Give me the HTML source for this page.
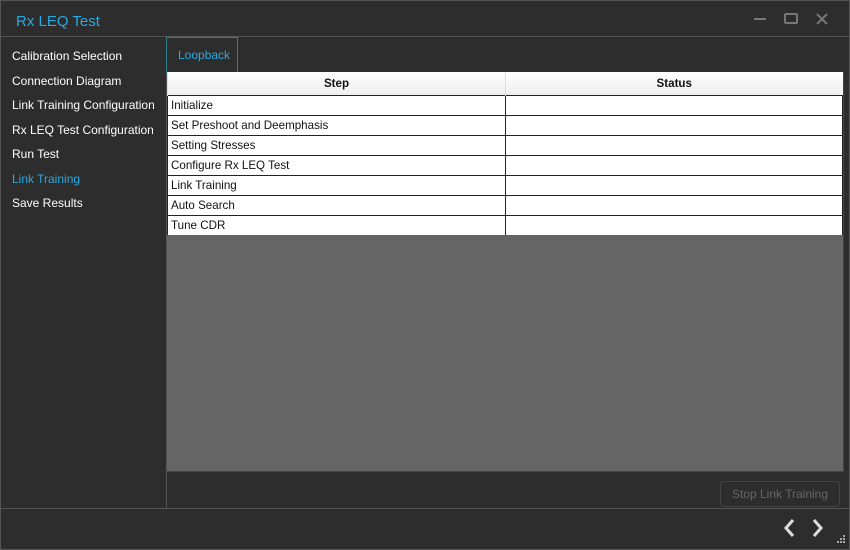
<!DOCTYPE html>
<html><head><style>
*{margin:0;padding:0;box-sizing:border-box}
body{width:850px;height:550px;background:#2d2d2d;font-family:"Liberation Sans",sans-serif;position:relative;overflow:hidden}
.win{position:absolute;left:0;top:0;width:850px;height:550px;border:1px solid #555}
.title{position:absolute;left:16px;top:13px;color:#29a9e0;font-size:15px}
.hline{position:absolute;background:#555;height:1px}
.vline{position:absolute;background:#555;width:1px}
.nav{position:absolute;left:12px;color:#fff;font-size:12px}
.tab{position:absolute;left:166px;top:37px;width:72px;height:36px;border:1px solid #2e7d8a;color:#29a9e0;font-size:12px;padding:10px 0 0 11px}
table{position:absolute;left:167px;top:72px;width:676px;border-collapse:collapse;background:#fff;font-size:11.6px}
th{height:23px;font-weight:bold;background:linear-gradient(#fff,#eee);border-left:1px solid #ddd;color:#111}
td{height:20px;border:1px solid #222;padding-left:3px;color:#111}
.gray{position:absolute;left:167px;top:235px;width:676px;height:236px;background:#656565}
.btn{position:absolute;left:720px;top:481px;width:120px;height:26px;border:1px solid #444;border-radius:3px;color:#666;font-size:12px;text-align:center;line-height:24px}
</style></head><body>
<div class="win"></div>
<div class="title">Rx LEQ Test</div>
<svg style="position:absolute;left:750px;top:10px" width="85" height="18">
<line x1="4" y1="9" x2="16" y2="9" stroke="#777" stroke-width="2"/>
<rect x="35" y="4" width="12" height="9" fill="none" stroke="#777" stroke-width="2" rx="1"/>
<path d="M67 4 L77 14 M77 4 L67 14" stroke="#777" stroke-width="2"/>
</svg>
<div class="hline" style="left:0;top:36px;width:850px"></div>
<div class="vline" style="left:166px;top:36px;height:472px"></div>
<div class="nav" style="top:49px">Calibration Selection</div>
<div class="nav" style="top:74px">Connection Diagram</div>
<div class="nav" style="top:98px">Link Training Configuration</div>
<div class="nav" style="top:123px">Rx LEQ Test Configuration</div>
<div class="nav" style="top:147px">Run Test</div>
<div class="nav" style="top:172px;color:#29a9e0">Link Training</div>
<div class="nav" style="top:196px">Save Results</div>
<div class="tab">Loopback</div>
<table>
<tr><th style="width:338px">Step</th><th>Status</th></tr>
<tr><td>Initialize</td><td></td></tr>
<tr><td>Set Preshoot and Deemphasis</td><td></td></tr>
<tr><td>Setting Stresses</td><td></td></tr>
<tr><td>Configure Rx LEQ Test</td><td></td></tr>
<tr><td>Link Training</td><td></td></tr>
<tr><td>Auto Search</td><td></td></tr>
<tr><td>Tune CDR</td><td></td></tr>
</table>
<div class="gray"></div>
<div class="vline" style="left:843px;top:72px;height:400px;background:#444"></div>
<div class="hline" style="left:167px;top:471px;width:677px;background:#444"></div>
<div class="btn">Stop Link Training</div>
<div class="hline" style="left:0;top:508px;width:850px"></div>
<svg style="position:absolute;left:780px;top:517px" width="70" height="33">
<path d="M13 3 L6 11 L13 19" fill="none" stroke="#ddd" stroke-width="3"/>
<path d="M34 3 L41 11 L34 19" fill="none" stroke="#ddd" stroke-width="3"/>
<g fill="#aaa"><rect x="63" y="18" width="2" height="2"/><rect x="60" y="21" width="2" height="2"/><rect x="63" y="21" width="2" height="2"/><rect x="57" y="24" width="2" height="2"/><rect x="60" y="24" width="2" height="2"/><rect x="63" y="24" width="2" height="2"/></g>
</svg>
</body></html>
